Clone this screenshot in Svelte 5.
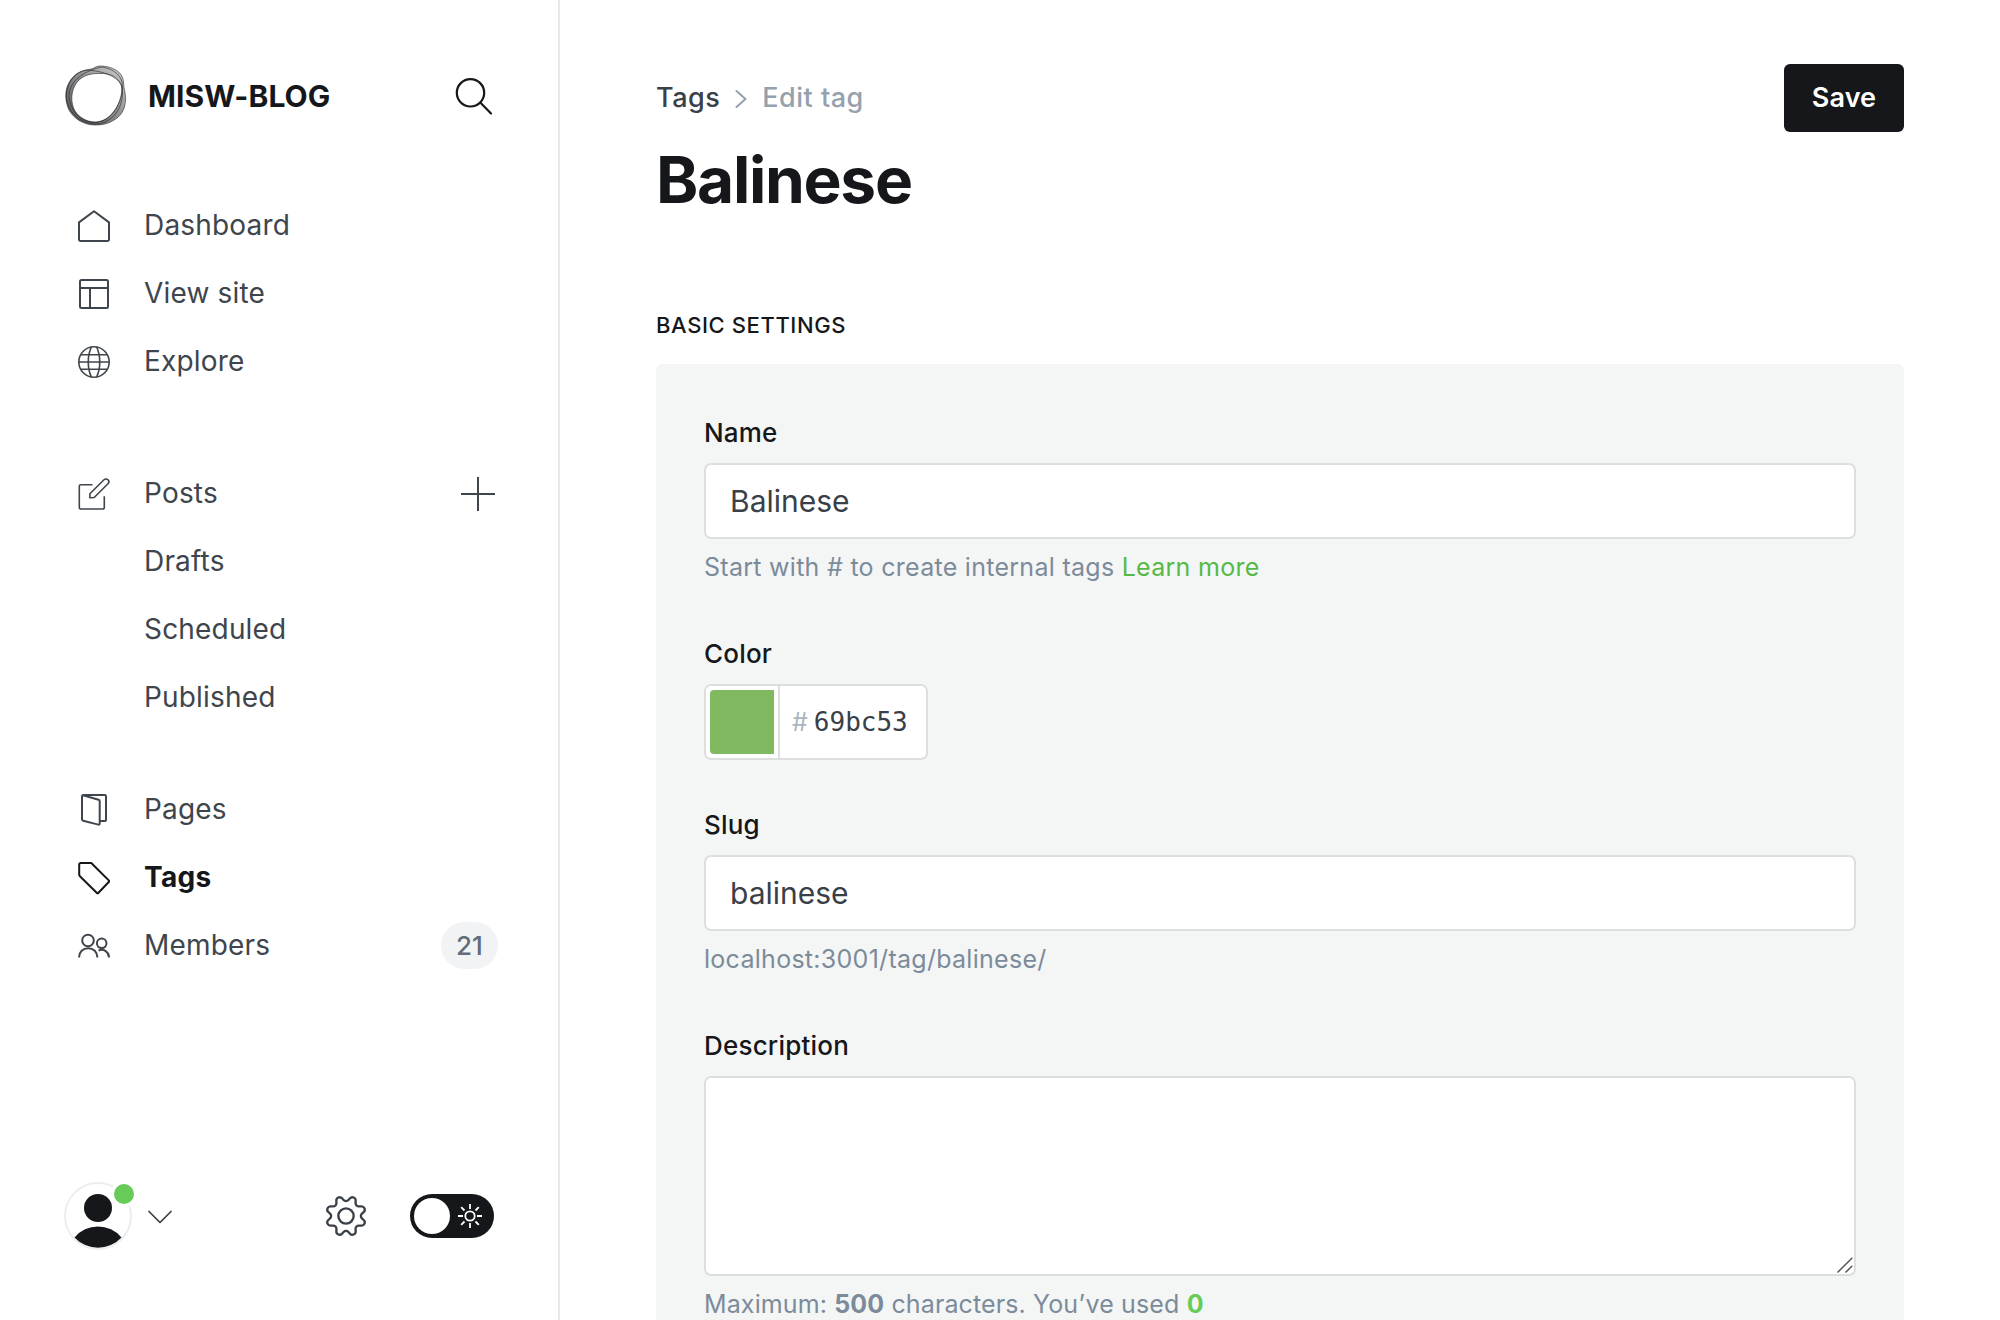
<script>
  const groups = [
    {
      id: 'site',
      items: [
        { label: 'Dashboard', icon: 'home' },
        { label: 'View site', icon: 'layout' },
        { label: 'Explore', icon: 'globe' }
      ]
    },
    {
      id: 'posts',
      items: [
        { label: 'Posts', icon: 'edit', add: true },
        { label: 'Drafts' },
        { label: 'Scheduled' },
        { label: 'Published' }
      ]
    },
    {
      id: 'content',
      items: [
        { label: 'Pages', icon: 'pages' },
        { label: 'Tags', icon: 'tag', active: true },
        { label: 'Members', icon: 'members', count: 21 }
      ]
    }
  ];

  let name = $state('Balinese');
  let color = $state('69bc53');
  let slug = $state('balinese');
  let description = $state('');
</script>

{#snippet icon(kind)}
  <svg class="icon" viewBox="0 0 32 32" width="32" height="32">
    {#if kind === 'home'}
      <path d="M1 12.4 16 1.2l15 11.2v17.1a1.5 1.5 0 0 1-1.5 1.5h-27A1.5 1.5 0 0 1 1 29.5z" />
    {:else if kind === 'layout'}
      <rect x="2" y="2" width="28" height="28" rx="1.5" />
      <path d="M2 10h28M12 10v20" />
    {:else if kind === 'globe'}
      <g class="fine">
        <circle cx="16" cy="16" r="15.2" />
        <path d="M.8 16h30.4M3 8.8h26M3 23.2h26M13.4 1C9.2 9.5 9.2 22.5 13.4 31M18.6 1c4.2 8.5 4.2 21.5 0 30" />
      </g>
    {:else if kind === 'edit'}
      <g class="fine">
        <path d="M14.5 6.8H2.8A1.5 1.5 0 0 0 1.3 8.3v21.2A1.5 1.5 0 0 0 2.8 31h22a1.5 1.5 0 0 0 1.5-1.5V18.3" />
        <path d="M11.9 19.7v-4L26 1.8a2.8 2.8 0 0 1 4 4L16.2 19.5z" />
      </g>
    {:else if kind === 'pages'}
      <path d="M21.5 27H27a1 1 0 0 0 1-1V2.2A1.2 1.2 0 0 0 26.8 1H5.2A1.2 1.2 0 0 0 4 2.2v23.1a1.4 1.4 0 0 0 1.1 1.4l15.3 3.9a1 1 0 0 0 1.3-1V7.2a1.5 1.5 0 0 0-1.1-1.4L5 1.2" />
    {:else if kind === 'tag'}
      <path d="M1.2 2.6A1.6 1.6 0 0 1 2.8 1h10.5L31 18.6v1.2L20 31.2h-.8L1.9 14.3a2.4 2.4 0 0 1-.7-1.7z" />
    {:else if kind === 'members'}
      <circle cx="10" cy="10.5" r="5.8" />
      <path d="M1 27.5c0-5.500 4-9.300 9.200-9.300s9.200 3.800 9.200 9.300" />
      <circle cx="23.7" cy="13.3" r="4.8" />
      <path d="M20.5 20.6c5.200-2.500 10.500 1.400 10.500 6.900" />
    {/if}
  </svg>
{/snippet}

<div class="app">
  <nav class="sidebar">
    <header class="brand">
      <svg class="logo" viewBox="0 0 62 62" width="62" height="62">
        <defs>
          <linearGradient id="band" x1="0" y1="1" x2="1" y2="0">
            <stop offset="0" stop-color="#15171a" stop-opacity=".72" />
            <stop offset=".5" stop-color="#15171a" stop-opacity=".5" />
            <stop offset="1" stop-color="#15171a" stop-opacity=".2" />
          </linearGradient>
        </defs>
        <path
          fill="url(#band)"
          fill-rule="evenodd"
          d="M35 1C46 1 58 6 58.5 17C58.5 24 61 28 60.5 35C60 45 56 51 49 55C43 59 37 60 30 60C18 60 8 53 3.5 44C-1 33-.5 20 9 11C16 4.5 25 5 29 3C31 1.5 33 1 35 1zM35 8.5C27 8.5 20 9.5 14 15C7 22 5 33 8.5 43C12 51 20 57 31 57C40 56 45 52 50 45C55 38 58 30 56.5 20C53 12 45 8 35 8.5z"
        />
        <path d="M22 5C35 6 54 10 57 23C60 42 47 59 30 59C14 58 3 47 1.5 32C1 18 11 6 22 5z" />
        <path d="M37 2C50 4 58 12 57.5 22C56 40 46 56 31 57.5C16 58 5 46 4 31C4 15 21 5 37 2z" />
      </svg>
      <span class="brand-name">MISW-BLOG</span>
      <svg class="search" viewBox="0 0 36 37" width="36" height="37">
        <circle cx="14.5" cy="14.8" r="13.7" />
        <path d="M24.5 24.8 35 35.5" />
      </svg>
    </header>

    {#each groups as group (group.id)}
      <ul class="group {group.id}">
        {#each group.items as item (item.label)}
          <li class="item" class:active={item.active}>
            <span class="slot">{#if item.icon}{@render icon(item.icon)}{/if}</span>
            <span class="label">{item.label}</span>
            {#if item.add}
              <svg class="plus" viewBox="0 0 34 34" width="34" height="34"><path d="M17 0v34M0 17h34" /></svg>
            {/if}
            {#if item.count}<span class="count">{item.count}</span>{/if}
          </li>
        {/each}
      </ul>
    {/each}

    <footer class="user-bar">
      <div class="avatar">
        <svg viewBox="0 0 68 68" width="68" height="68">
          <circle class="ring" cx="34" cy="34" r="33" />
          <circle cx="34" cy="26" r="14" />
          <path d="M10.5 55.5a30.5 30.5 0 0 1 47 0A32 32 0 0 1 10.5 55.5z" />
        </svg>
        <span class="status"></span>
      </div>
      <svg class="caret" viewBox="0 0 24 14" width="24" height="14"><path d="m1 1.5 11 11 11-11" /></svg>
      <svg class="gear" viewBox="0 0 24 24" width="40" height="40">
        <path d="M10.546 2.438a1.957 1.957 0 0 0 2.908 0L14.4 1.4a1.959 1.959 0 0 1 3.41 1.413l-.071 1.4a1.958 1.958 0 0 0 2.051 2.054l1.4-.071a1.959 1.959 0 0 1 1.41 3.41l-1.042.94a1.96 1.96 0 0 0 0 2.909l1.042.94a1.959 1.959 0 0 1-1.413 3.41l-1.4-.071a1.958 1.958 0 0 0-2.056 2.056l.071 1.4A1.959 1.959 0 0 1 14.4 22.6l-.941-1.041a1.959 1.959 0 0 0-2.908 0L9.606 22.6A1.959 1.959 0 0 1 6.2 21.192l.072-1.4a1.958 1.958 0 0 0-2.056-2.056l-1.4.071A1.958 1.958 0 0 1 1.4 14.4l1.041-.94a1.96 1.96 0 0 0 0-2.909L1.4 9.606A1.958 1.958 0 0 1 2.809 6.2l1.4.071a1.958 1.958 0 0 0 2.058-2.06L6.2 2.81A1.959 1.959 0 0 1 9.606 1.4z" />
        <circle cx="12" cy="12" r="4.6" />
      </svg>
      <div class="toggle">
        <span class="knob"></span>
        <svg viewBox="0 0 24 24" width="24" height="24">
          <circle cx="12" cy="12" r="4.7" />
          <path d="M12 0v5M12 19v5M0 12h5M19 12h5M3.2 3.2l3.3 3.3M17.5 17.5l3.3 3.3M3.2 20.8l3.3-3.3M17.5 6.5l3.3-3.3" />
        </svg>
      </div>
    </footer>
  </nav>

  <main>
    <header class="page-head">
      <div>
        <div class="crumbs">
          <span>Tags</span>
          <svg viewBox="0 0 12 18" width="12" height="18"><path d="m1.5 1 9 8-9 8" /></svg>
          <span class="current">Edit tag</span>
        </div>
        <h1>Balinese</h1>
      </div>
      <button class="save">Save</button>
    </header>

    <h4>Basic settings</h4>
    <section class="panel">
      <div class="field">
        <label for="name">Name</label>
        <input id="name" class="control" bind:value={name} />
        <p>Start with # to create internal tags <span class="link">Learn more</span></p>
      </div>
      <div class="field">
        <label for="color">Color</label>
        <div class="control color">
          <span class="swatch"></span>
          <span class="hash">#</span>
          <input id="color" bind:value={color} />
        </div>
      </div>
      <div class="field">
        <label for="slug">Slug</label>
        <input id="slug" class="control" bind:value={slug} />
        <p>localhost:3001/tag/balinese/</p>
      </div>
      <div class="field">
        <label for="description">Description</label>
        <div class="area">
          <textarea id="description" class="control" bind:value={description}></textarea>
          <svg class="grip" viewBox="0 0 16 16" width="16" height="16"><path d="M.5 15.5 15.3.7M8.5 15.5l6.8-6.8" /></svg>
        </div>
        <p class="limit">Maximum: <b>500</b> characters. You’ve used <b class="used">{description.length}</b></p>
      </div>
    </section>
  </main>
</div>

<style>
  :global(body) { background: #fff; overflow: hidden; }
  .app, .app * { box-sizing: border-box; }
  .app {
    display: flex;
    height: 1320px;
    overflow: hidden;
    font-family: Inter, sans-serif;
    font-size: 28px;
    color: #394047;
  }
  svg { display: block; flex: none; fill: none; stroke: currentColor; overflow: visible; }

  .sidebar {
    display: flex;
    flex-direction: column;
    flex: none;
    width: 560px;
    padding: 65px 60px 70px 64px;
    border-right: 2px solid #e6e9eb;
  }
  .brand { display: flex; align-items: center; height: 62px; color: #15171a; }
  .logo { margin-left: 1px; stroke-width: 0.9; stroke-opacity: 0.6; }
  .brand-name { margin-left: 21px; font-size: 30px; font-weight: 700; letter-spacing: 0.1px; }
  .search { margin: 0 6px 0 auto; stroke-width: 2.2; stroke-linecap: round; }

  ul { list-style: none; margin: 0; padding: 0; }
  .site { margin-top: 64px; }
  .posts { margin-top: 64px; }
  .content { margin-top: 44px; }
  .item { display: flex; align-items: center; height: 68px; color: #3e454c; }
  .slot { width: 66px; height: 32px; margin: 2px 0 0 14px; }
  .icon { stroke-width: 2; stroke-linejoin: round; }
  .fine { stroke-width: 1.6; }
  .label { letter-spacing: 0.18px; }
  .item.active { color: #15171a; }
  .active .label { font-weight: 700; letter-spacing: 0.3px; }
  .plus { margin: 2px 3px 0 auto; stroke-width: 2; }
  .count {
    display: flex;
    align-items: center;
    justify-content: center;
    width: 57px;
    height: 47px;
    margin-left: auto;
    border-radius: 24px;
    background: #f1f3f4;
    color: #626d79;
    font-size: 26px;
    font-weight: 500;
  }

  .user-bar { display: flex; align-items: center; height: 68px; margin-top: auto; }
  .avatar { position: relative; }
  .avatar svg { fill: #15171a; stroke: none; }
  .avatar .ring { fill: #fff; stroke: #ebeef0; stroke-width: 2; }
  .status {
    position: absolute;
    top: -1px;
    right: -5px;
    width: 26px;
    height: 26px;
    border: 3px solid #fff;
    border-radius: 50%;
    background: #66cc57;
  }
  .caret { margin: 2px 0 0 16px; stroke-width: 1.7; stroke-linecap: round; stroke-linejoin: round; }
  .gear { margin-left: auto; stroke-width: 1.4; }
  .toggle {
    display: flex;
    align-items: center;
    gap: 8px;
    width: 84px;
    height: 44px;
    margin: 0 4px 0 44px;
    padding-left: 4px;
    border-radius: 22px;
    background: #15171a;
    color: #fff;
  }
  .toggle svg { stroke-width: 1.8; }
  .knob { width: 36px; height: 36px; border-radius: 50%; background: #fff; }

  main { flex: 1; padding: 64px 96px 0; }
  .page-head { display: flex; justify-content: space-between; height: 240px; }
  .crumbs { display: flex; align-items: center; height: 66px; font-size: 27px; font-weight: 500; letter-spacing: 0.5px; }
  .crumbs svg { margin: 4px 15px 0 15px; stroke: #95a1ad; stroke-width: 2; stroke-linecap: round; stroke-linejoin: round; }
  .current { color: #95a1ad; }
  h1 { margin: 10px 0 0; line-height: 80px; font-size: 64px; font-weight: 700; letter-spacing: -1.3px; color: #15171a; }
  .save {
    width: 120px;
    height: 68px;
    padding: 0 0 2px;
    border: 0;
    border-radius: 6px;
    background: #15171a;
    color: #fff;
    font: 600 27px Inter, sans-serif;
    letter-spacing: 0.1px;
  }
  h4 { margin: 0; height: 60px; line-height: 42px; font-size: 22px; font-weight: 500; letter-spacing: 0.6px; text-transform: uppercase; color: #15171a; }
  .panel {
    display: flex;
    flex-direction: column;
    height: 1100px;
    padding: 48px;
    border-radius: 6px;
    background: #f4f6f5;
  }
  .field { display: flex; flex-direction: column; align-items: flex-start; margin-bottom: 44px; }
  .field:has(p) { margin-bottom: 50px; }
  label { height: 51px; line-height: 41px; font-size: 26px; font-weight: 500; letter-spacing: 0.2px; color: #15171a; }
  .control {
    display: flex;
    width: 100%;
    height: 76px;
    padding: 0 24px;
    border: 2px solid #dddfdf;
    border-radius: 7px;
    background: #fff;
    color: #394047;
    font: 400 30px Inter, sans-serif;
    outline: 0;
  }
  .color { align-items: center; width: 224px; padding: 0 0 0 4px; }
  .swatch { width: 64px; height: 64px; border-radius: 4px 0 0 4px; background: #80b95f; }
  .hash {
    display: flex;
    align-items: center;
    height: 72px;
    margin-left: 4px;
    padding-left: 12px;
    border-left: 2px solid #dddfdf;
    color: #abb4be;
    font-size: 25px;
  }
  .color input {
    width: 110px;
    margin-left: 6px;
    padding: 0;
    border: 0;
    background: none;
    color: #394047;
    font: 26px "DejaVu Sans Mono", monospace;
    outline: 0;
  }
  .area { position: relative; width: 100%; height: 200px; }
  textarea.control { display: block; height: 200px; resize: none; }
  .grip { position: absolute; right: 3px; bottom: 3px; stroke: #55585c; stroke-width: 1.5; }
  p { margin: 12px 0 0; line-height: 32px; font-size: 25px; letter-spacing: 0.28px; color: #7c8b9a; }
  .limit { letter-spacing: 0.12px; }
  .link { color: #57b947; }
  .used { color: #66cc57; }
</style>
